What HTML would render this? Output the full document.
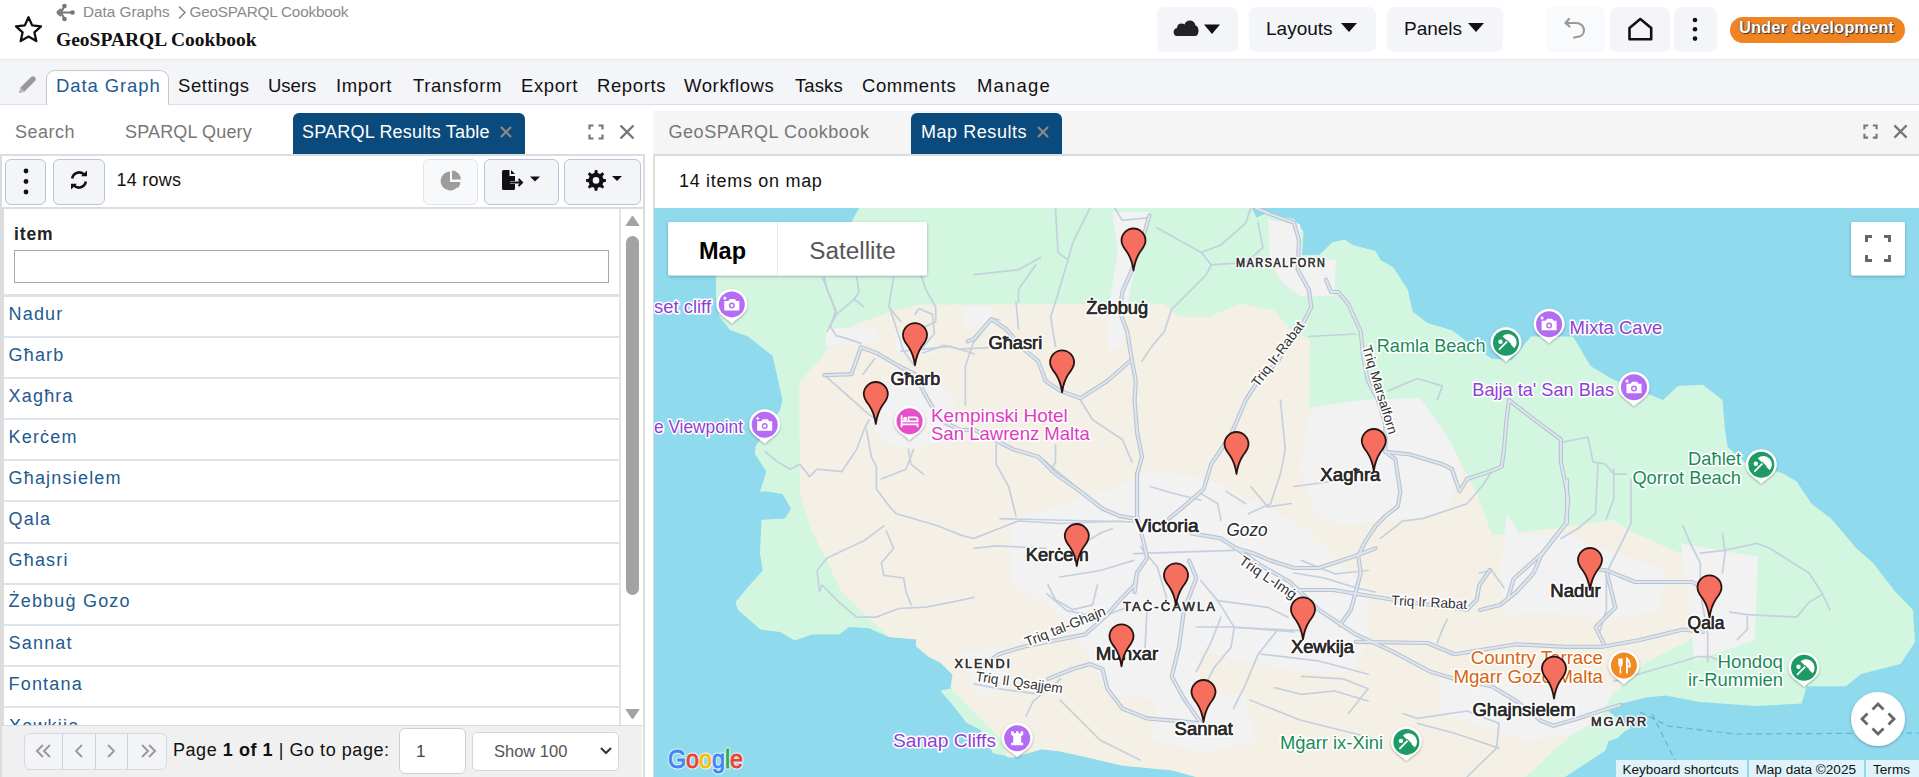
<!DOCTYPE html>
<html><head><meta charset="utf-8">
<style>
*{box-sizing:border-box;margin:0;padding:0}
html,body{width:1919px;height:777px;overflow:hidden;background:#fff;font-family:"Liberation Sans",sans-serif;color:#111}
.a{position:absolute}
.t{position:absolute;white-space:nowrap;line-height:1}
.hb{position:absolute;background:#f4f5f9;border-radius:7px}
.nav{position:absolute;left:0;top:59px;width:1919px;height:46px;background:#f4f5f9;border-top:1px solid #e6e8ee;border-bottom:1px solid #dcdfe5}
.ni{position:absolute;top:77px;font-size:18.5px;color:#111;line-height:1;white-space:nowrap}
.btn{position:absolute;background:#f4f5f9;border:1px solid #b9c3dd;border-radius:6px}
.row{position:absolute;left:3px;width:617px;height:2px;background:#dde3ea}
.rt{position:absolute;left:8.5px;font-size:18px;color:#245a8f;line-height:1;white-space:nowrap;letter-spacing:1.2px}
</style></head>
<body>
<!-- header -->
<svg class="a" style="left:13px;top:14px" width="31" height="31" viewBox="0 0 31 31"><path d="M15.5 3.2 L19.2 11.4 L28 12.3 L21.4 18.3 L23.3 27.1 L15.5 22.6 L7.7 27.1 L9.6 18.3 L3 12.3 L11.8 11.4 Z" fill="none" stroke="#111" stroke-width="2.3" stroke-linejoin="round"/></svg>
<svg class="a" style="left:55px;top:3px" width="21" height="19" viewBox="0 0 21 19"><g fill="#777"><circle cx="9.5" cy="3" r="2.3"/><circle cx="9.5" cy="16" r="2.3"/><circle cx="17.5" cy="9.5" r="2.3"/></g><path d="M2 9.5 L17 9.5 M9.5 3 L6 9.5 L9.5 16 M2 9.5 L6 6 M2 9.5 L6 13" stroke="#777" stroke-width="2" fill="none"/></svg>
<div class="t" style="left:83px;top:4px;font-size:15.3px;color:#8a8a8a">Data Graphs</div>
<svg class="a" style="left:177px;top:5px" width="10" height="15" viewBox="0 0 10 15"><path d="M2 1.5 L8 7.5 L2 13.5" stroke="#888" stroke-width="1.6" fill="none"/></svg>
<div class="t" style="left:189.5px;top:4px;font-size:15.3px;color:#8a8a8a;letter-spacing:-0.2px">GeoSPARQL Cookbook</div>
<div class="t" style="left:56px;top:29.8px;font-family:'Liberation Serif',serif;font-weight:bold;font-size:19.5px;color:#111">GeoSPARQL Cookbook</div>

<div class="hb" style="left:1157px;top:7px;width:81px;height:45px"></div>
<svg class="a" style="left:1172px;top:18px" width="50" height="20" viewBox="0 0 50 20"><path d="M5 18 C0.5 18 0.5 10.5 5 10 C5 5.5 10 4.5 12.5 6.5 C14 1 22.5 1 23.5 7.5 C27.5 8 27.5 17.5 23.5 18 Z" fill="#222"/><path d="M32 6.5 L48 6.5 L40 16 Z" fill="#111"/></svg>
<div class="hb" style="left:1249px;top:7px;width:127px;height:45px"></div>
<div class="t" style="left:1266px;top:19px;font-size:19px;color:#111">Layouts</div>
<svg class="a" style="left:1341px;top:23px" width="16" height="10" viewBox="0 0 16 10"><path d="M0 0 L16 0 L8 9 Z" fill="#111"/></svg>
<div class="hb" style="left:1387px;top:7px;width:116px;height:45px"></div>
<div class="t" style="left:1404px;top:19px;font-size:19px;color:#111">Panels</div>
<svg class="a" style="left:1468px;top:23px" width="16" height="10" viewBox="0 0 16 10"><path d="M0 0 L16 0 L8 9 Z" fill="#111"/></svg>

<div class="hb" style="left:1546px;top:7px;width:59px;height:45px;background:#f9fafb"></div>
<svg class="a" style="left:1563px;top:16px" width="26" height="26" viewBox="0 0 26 26"><path d="M6 3 L2.5 7 L6.5 10.5 M3 7 L13 7 C18 7 21 10.5 21 14 C21 18 18 21 13.5 21 L11 21.5" stroke="#999" stroke-width="2.2" fill="none" stroke-linecap="round" stroke-linejoin="round"/></svg>
<div class="hb" style="left:1610px;top:7px;width:60px;height:45px"></div>
<svg class="a" style="left:1626px;top:16px" width="29" height="27" viewBox="0 0 29 27"><path d="M3.5 12 L14.3 3 L25.2 12 L25.2 23.3 L3.5 23.3 Z" stroke="#111" stroke-width="2.6" fill="none" stroke-linejoin="round"/></svg>
<div class="hb" style="left:1674px;top:7px;width:43px;height:45px"></div>
<svg class="a" style="left:1690px;top:16px" width="10" height="27" viewBox="0 0 10 27"><g fill="#111"><circle cx="5" cy="4" r="2.3"/><circle cx="5" cy="13.3" r="2.3"/><circle cx="5" cy="22.6" r="2.3"/></g></svg>
<div class="a" style="left:1730px;top:17px;width:175px;height:26px;background:#f08322;border-radius:13px"></div>
<div class="t" style="left:1739px;top:18.5px;font-size:16.5px;font-weight:bold;color:#fff;letter-spacing:0.05px;text-shadow:1px 1px 1px #333,0 0 1px #333">Under development</div>

<!-- nav -->
<div class="nav"></div>
<svg class="a" style="left:16px;top:74px" width="22" height="22" viewBox="0 0 22 22"><path d="M3 19 L4.5 13.5 L15 3 C16 2 17.5 2 18.5 3 L19 3.5 C20 4.5 20 6 19 7 L8.5 17.5 Z" fill="#999"/><path d="M3 19 L4.5 13.5 L8.5 17.5 Z" fill="#bbb"/></svg>
<div class="a" style="left:46px;top:70px;width:123px;height:35px;background:#fff;border:1px solid #c8c8c8;border-bottom:none;border-radius:9px 9px 0 0"></div>
<div class="ni" style="left:56px;color:#1d5b96;letter-spacing:0.9px">Data Graph</div>
<div class="ni" style="left:178px;letter-spacing:0.6px">Settings</div>
<div class="ni" style="left:268px;letter-spacing:0.0px">Users</div>
<div class="ni" style="left:336px;letter-spacing:0.6px">Import</div>
<div class="ni" style="left:413px;letter-spacing:0.6px">Transform</div>
<div class="ni" style="left:521px;letter-spacing:0.6px">Export</div>
<div class="ni" style="left:597px;letter-spacing:0.6px">Reports</div>
<div class="ni" style="left:684px;letter-spacing:0.6px">Workflows</div>
<div class="ni" style="left:795px;letter-spacing:0.1px">Tasks</div>
<div class="ni" style="left:862px;letter-spacing:0.6px">Comments</div>
<div class="ni" style="left:977px;letter-spacing:1.2px">Manage</div>

<!-- LEFT PANEL -->
<div class="t" style="left:15px;top:123px;font-size:18px;color:#777;letter-spacing:0.5px">Search</div>
<div class="t" style="left:125px;top:123px;font-size:18px;color:#777;letter-spacing:0.15px">SPARQL Query</div>
<div class="a" style="left:293px;top:113px;width:232px;height:41px;background:#0b4a7c;border-radius:6px 6px 0 0"></div>
<div class="t" style="left:302px;top:123px;font-size:18px;color:#fff;letter-spacing:0.2px">SPARQL Results Table</div>
<svg class="a" style="left:499px;top:125px" width="14" height="14" viewBox="0 0 14 14"><path d="M2 2 L12 12 M12 2 L2 12" stroke="#8a8a8a" stroke-width="2.2"/></svg>
<svg class="a" style="left:588px;top:124px" width="16" height="16" viewBox="0 0 16 16"><path d="M1.5 5.5 V1.5 H5.5 M10.5 1.5 H14.5 V5.5 M14.5 10.5 V14.5 H10.5 M5.5 14.5 H1.5 V10.5" stroke="#777" stroke-width="2.2" fill="none"/></svg>
<svg class="a" style="left:619px;top:124px" width="16" height="16" viewBox="0 0 16 16"><path d="M1.5 1.5 L14.5 14.5 M14.5 1.5 L1.5 14.5" stroke="#777" stroke-width="2.4"/></svg>
<div class="a" style="left:0;top:154px;width:645px;height:623px;border:2px solid #dcdcdc;border-bottom:none"></div>

<div class="btn" style="left:5px;top:159px;width:41px;height:46px"></div>
<svg class="a" style="left:21px;top:166px" width="10" height="32" viewBox="0 0 10 32"><g fill="#111"><circle cx="5" cy="5" r="2.4"/><circle cx="5" cy="15.5" r="2.4"/><circle cx="5" cy="26" r="2.4"/></g></svg>
<div class="btn" style="left:53px;top:159px;width:52px;height:46px"></div>
<svg class="a" style="left:69px;top:170px" width="20" height="20" viewBox="0 0 20 20"><path d="M3.2 8.5 A7 7 0 0 1 15.5 5" stroke="#111" stroke-width="2.6" fill="none"/><path d="M12 6.2 L18 6.2 L18 0.5 Z" fill="#111"/><path d="M16.8 11.5 A7 7 0 0 1 4.5 15" stroke="#111" stroke-width="2.6" fill="none"/><path d="M8 13.8 L2 13.8 L2 19.5 Z" fill="#111"/></svg>
<div class="t" style="left:116.5px;top:171px;font-size:18px;color:#111;letter-spacing:0.25px">14 rows</div>
<div class="btn" style="left:423px;top:159px;width:55px;height:46px;background:#f8f9fb;border-color:#dfe3ee"></div>
<svg class="a" style="left:440px;top:170px" width="22" height="22" viewBox="0 0 22 22"><path d="M10 1.5 A9.5 9.5 0 1 0 19.5 12 L10 12 Z" fill="#9c9c9c"/><path d="M12 0.5 A9.5 9.5 0 0 1 21 9.5 L12 9.5 Z" fill="#9c9c9c"/><path d="M12.2 12.2 L20.5 12.2 A9.5 9.5 0 0 1 18 18.2 Z" fill="#9c9c9c"/></svg>
<div class="btn" style="left:484px;top:159px;width:75px;height:46px"></div>
<svg class="a" style="left:500px;top:169px" width="45" height="22" viewBox="0 0 45 22"><path d="M2 2.5 Q2 1 3.5 1 L9.5 1 L9.5 7 L15 7 L15 12 L10 12 L10 15 L15 15 L15 19.5 Q15 21 13.5 21 L3.5 21 Q2 21 2 19.5 Z" fill="#111"/><path d="M11 1 L15 5 L11 5 Z" fill="#111"/><path d="M10 13.5 L22 13.5 M18.5 10 L22 13.5 L18.5 17" stroke="#111" stroke-width="2" fill="none"/><path d="M30 7.5 L40 7.5 L35 12.5 Z" fill="#111"/></svg>
<div class="btn" style="left:564px;top:159px;width:77px;height:46px"></div>
<svg class="a" style="left:584px;top:169px" width="42" height="22" viewBox="0 0 42 22"><path d="M11 1 L13.3 1 L13.8 4 L16 5 L18.5 3.2 L20.2 5 L18.5 7.5 L19.3 9.7 L22 10.2 L22 12.7 L19.3 13.2 L18.5 15.4 L20.2 17.9 L18.5 19.6 L16 17.9 L13.8 18.8 L13.3 21.8 L10.7 21.8 L10.2 18.8 L8 17.9 L5.5 19.6 L3.8 17.9 L5.5 15.4 L4.6 13.2 L2 12.7 L2 10.2 L4.6 9.7 L5.5 7.5 L3.8 5 L5.5 3.2 L8 5 L10.2 4 Z" fill="#111"/><circle cx="12" cy="11.4" r="3.3" fill="#f4f5f9"/><path d="M28 7 L38 7 L33 12 Z" fill="#111"/></svg>
<div class="a" style="left:2px;top:207px;width:641px;height:2px;background:#dcdcdc"></div>

<!-- table -->
<div class="a" style="left:2px;top:209px;width:2px;height:516px;background:#dcdcdc"></div>
<div class="t" style="left:14px;top:226px;font-size:17.5px;font-weight:bold;color:#222;letter-spacing:0.9px">item</div>
<div class="a" style="left:14px;top:250px;width:595px;height:33px;border:1px solid #a8a8a8;background:#fff"></div>
<div class="a" style="left:3px;top:294px;width:617px;height:3px;background:#dee2e7"></div>
<div class="a" style="left:619px;top:209px;width:2px;height:516px;background:#e1e5ea"></div>
<div class="row" style="top:336px"></div><div class="row" style="top:377px"></div><div class="row" style="top:418px"></div><div class="row" style="top:459px"></div><div class="row" style="top:500px"></div><div class="row" style="top:542px"></div><div class="row" style="top:583px"></div><div class="row" style="top:624px"></div><div class="row" style="top:665px"></div><div class="row" style="top:706px"></div>
<div class="rt" style="top:304.6px">Nadur</div>
<div class="rt" style="top:345.7px">Għarb</div>
<div class="rt" style="top:386.8px">Xagħra</div>
<div class="rt" style="top:428.0px">Kerċem</div>
<div class="rt" style="top:469.1px">Għajnsielem</div>
<div class="rt" style="top:510.2px">Qala</div>
<div class="rt" style="top:551.3px">Għasri</div>
<div class="rt" style="top:592.4px">Żebbuġ Gozo</div>
<div class="rt" style="top:633.6px">Sannat</div>
<div class="rt" style="top:674.7px">Fontana</div>
<div class="a" style="left:3px;top:708px;width:616px;height:17px;overflow:hidden"><div class="rt" style="top:9px;left:6px">Xewkija</div></div>
<svg class="a" style="left:625px;top:215px" width="15" height="12" viewBox="0 0 15 12"><path d="M7.5 1 L14 10.5 L1 10.5 Z" fill="#a3a3a3" stroke="#a3a3a3" stroke-width="1" stroke-linejoin="round"/></svg>
<div class="a" style="left:626px;top:236px;width:13px;height:359px;background:#a3a3a3;border-radius:6.5px"></div>
<svg class="a" style="left:625px;top:708px" width="15" height="12" viewBox="0 0 15 12"><path d="M1 1.5 L14 1.5 L7.5 11 Z" fill="#a3a3a3" stroke="#a3a3a3" stroke-width="1" stroke-linejoin="round"/></svg>

<!-- footer -->
<div class="a" style="left:2px;top:725px;width:640px;height:52px;background:#f0f0f0;border-top:1px solid #d8d8d8"></div>
<div class="a" style="left:24px;top:733px;width:143px;height:37px;border:1px solid #d5dae6;border-radius:6px;background:#f3f4f7"></div>
<div class="a" style="left:62px;top:734px;width:1px;height:35px;background:#c9d0e2"></div>
<div class="a" style="left:95px;top:734px;width:1px;height:35px;background:#c9d0e2"></div>
<div class="a" style="left:127px;top:734px;width:1px;height:35px;background:#c9d0e2"></div>
<svg class="a" style="left:34px;top:743px" width="20" height="16" viewBox="0 0 20 16"><path d="M9 2 L3 8 L9 14 M16 2 L10 8 L16 14" stroke="#9a9a9a" stroke-width="2" fill="none"/></svg>
<svg class="a" style="left:73px;top:743px" width="12" height="16" viewBox="0 0 12 16"><path d="M9 2 L3 8 L9 14" stroke="#9a9a9a" stroke-width="1.8" fill="none"/></svg>
<svg class="a" style="left:105px;top:743px" width="12" height="16" viewBox="0 0 12 16"><path d="M3 2 L9 8 L3 14" stroke="#9a9a9a" stroke-width="1.8" fill="none"/></svg>
<svg class="a" style="left:138px;top:743px" width="20" height="16" viewBox="0 0 20 16"><path d="M4 2 L10 8 L4 14 M11 2 L17 8 L11 14" stroke="#9a9a9a" stroke-width="2" fill="none"/></svg>
<div class="t" style="left:173px;top:740.5px;font-size:18px;color:#111;letter-spacing:0.55px">Page <b>1 of 1</b> | Go to page:</div>
<div class="a" style="left:399px;top:728px;width:67px;height:46px;border:1px solid #cfcfcf;border-radius:6px;background:#fff"></div>
<div class="t" style="left:416px;top:743px;font-size:17px;color:#444">1</div>
<div class="a" style="left:472px;top:732px;width:147px;height:39px;border:1px solid #d6d6d6;border-radius:5px;background:#fff"></div>
<div class="t" style="left:494px;top:743px;font-size:16.5px;color:#555">Show 100</div>
<svg class="a" style="left:599px;top:746px" width="14" height="10" viewBox="0 0 14 10"><path d="M2 2 L7 7 L12 2" stroke="#333" stroke-width="2" fill="none"/></svg>

<!-- RIGHT PANEL -->
<div class="a" style="left:653px;top:111px;width:1266px;height:43px;background:#f5f5f5"></div>
<div class="t" style="left:668.5px;top:123px;font-size:18px;color:#777;letter-spacing:0.55px">GeoSPARQL Cookbook</div>
<div class="a" style="left:911px;top:113px;width:151px;height:41px;background:#0b4a7c;border-radius:6px 6px 0 0"></div>
<div class="t" style="left:921px;top:123px;font-size:18px;color:#fff;letter-spacing:0.55px">Map Results</div>
<svg class="a" style="left:1036px;top:125px" width="14" height="14" viewBox="0 0 14 14"><path d="M2 2 L12 12 M12 2 L2 12" stroke="#8a8a8a" stroke-width="2.2"/></svg>
<svg class="a" style="left:1863px;top:124px" width="15" height="15" viewBox="0 0 16 16"><path d="M1.5 5.5 V1.5 H5.5 M10.5 1.5 H14.5 V5.5 M14.5 10.5 V14.5 H10.5 M5.5 14.5 H1.5 V10.5" stroke="#777" stroke-width="2.2" fill="none"/></svg>
<svg class="a" style="left:1893px;top:124px" width="15" height="15" viewBox="0 0 16 16"><path d="M1.5 1.5 L14.5 14.5 M14.5 1.5 L1.5 14.5" stroke="#777" stroke-width="2.4"/></svg>
<div class="a" style="left:653px;top:154px;width:1266px;height:623px;border:2px solid #dcdcdc;border-right:none;border-bottom:none"></div>
<div class="t" style="left:679px;top:172px;font-size:18px;color:#111;letter-spacing:0.7px">14 items on map</div>

<!-- MAP -->
<div id="map" class="a" style="left:654px;top:208px;width:1265px;height:569px;overflow:hidden;background:#90daee">
<svg width="1265" height="569" viewBox="654 208 1265 569" style="position:absolute;left:0;top:0">
<rect x="654" y="208" width="1265" height="569" fill="#90daee"/>
<path d="M859.0 208.0 L1251.8 208.0 L1256.5 217.4 L1266.0 213.5 L1294.2 219.0 L1303.6 231.6 L1302.0 255.0 L1319.3 255.0 L1332.0 242.5 L1344.5 239.4 L1353.0 245.0 L1375.5 251.0 L1380.5 260.0 L1393.0 267.0 L1407.7 289.5 L1412.6 311.8 L1427.4 322.9 L1452.0 330.3 L1467.0 341.4 L1491.7 358.7 L1511.4 360.0 L1531.0 336.5 L1573.0 336.5 L1590.5 366.0 L1611.0 378.5 L1663.0 400.0 L1678.0 386.0 L1702.8 384.7 L1722.5 400.0 L1725.0 429.7 L1727.5 447.0 L1747.0 464.0 L1781.8 473.0 L1796.7 481.5 L1811.5 503.8 L1831.0 518.6 L1856.0 548.0 L1873.0 563.0 L1895.5 592.0 L1913.0 610.0 L1915.0 642.0 L1900.5 664.0 L1861.0 674.0 L1846.0 686.3 L1806.6 686.3 L1801.6 703.6 L1757.0 706.0 L1700.0 702.0 L1665.7 695.4 L1646.0 697.6 L1620.5 703.7 L1608.4 711.2 L1631.0 727.8 L1623.5 732.3 L1617.5 738.3 L1608.4 741.3 L1605.4 750.4 L1591.9 759.4 L1565.0 777.0 L1196.4 777.0 L1171.7 770.3 L1122.0 765.4 L1090.0 758.0 L1060.0 751.3 L1041.4 749.3 L1013.0 757.4 L993.0 753.3 L980.8 730.0 L966.7 723.0 L952.5 704.8 L940.4 690.7 L948.5 688.7 L960.6 688.7 L968.7 692.7 L964.6 680.6 L968.7 673.5 L986.9 667.5 L978.8 668.5 L958.6 669.5 L952.5 674.5 L940.4 662.4 L928.3 656.4 L916.2 646.3 L916.2 639.2 L888.7 637.0 L869.0 628.2 L849.2 627.0 L839.3 634.4 L812.0 634.4 L794.8 640.6 L780.0 632.0 L760.3 629.5 L738.0 609.7 L735.5 602.3 L745.4 590.0 L762.7 570.5 L760.0 553.0 L761.5 519.8 L785.0 518.6 L791.0 508.7 L782.5 494.0 L767.7 491.4 L760.0 491.4 L766.4 471.7 L755.0 454.0 L755.3 447.0 L780.0 410.0 L782.5 400.0 L772.6 356.0 L748.0 336.5 L730.0 330.0 L719.5 316.7 L716.0 300.0 L716.0 276.0 L790.0 255.0 L850.0 225.0 Z" fill="#d3f6e1"/>
<path d="M799.3 400.0 L799.3 382.0 L818.6 360.7 L838.0 333.7 L857.2 324.0 L888.0 312.5 L919.0 304.7 L974.0 304.4 L1164.0 304.0 L1179.0 316.7 L1208.7 316.7 L1240.8 303.8 L1273.8 310.0 L1291.0 330.0 L1310.0 340.0 L1309.0 400.0 L1309.0 425.0 L1373.0 425.0 L1440.0 425.0 L1464.5 469.0 L1477.0 494.0 L1491.7 534.7 L1505.0 534.0 L1542.0 530.0 L1613.0 520.0 L1630.0 531.0 L1655.0 542.0 L1692.0 559.0 L1700.0 600.0 L1690.0 640.0 L1646.0 662.0 L1618.0 690.0 L1587.0 720.0 L1525.6 777.0 L1196.4 777.0 L1171.7 770.3 L1122.0 765.4 L1090.0 758.0 L1060.0 751.3 L1041.4 749.3 L1013.0 757.4 L1007.0 757.0 L1001.0 739.2 L950.5 687.7 L952.5 674.5 L940.4 662.4 L928.3 656.4 L916.2 646.3 L916.2 639.2 L888.7 637.0 L841.8 592.0 L812.0 531.0 L799.8 494.0 Z" fill="#f5f0e6"/>
<path d="M826.0 328.0 L876.5 328.0 L880.0 343.0 L826.0 345.0 Z" fill="#f2f2f3"/>
<path d="M895.8 331.8 L934.4 331.8 L934.4 355.0 L895.8 355.0 Z" fill="#f2f2f3"/>
<path d="M880.0 378.0 L930.0 382.0 L955.0 395.0 L950.0 440.0 L915.0 448.0 L885.0 445.0 L870.0 420.0 Z" fill="#f2f2f3"/>
<path d="M965.0 306.7 L992.0 306.7 L992.0 328.0 L965.0 328.0 Z" fill="#f2f2f3"/>
<path d="M1112.0 212.0 L1150.0 212.0 L1140.0 250.0 L1128.0 300.0 L1122.0 345.0 L1108.0 352.0 L1110.0 300.0 L1118.0 250.0 Z" fill="#f2f2f3"/>
<path d="M1268.0 220.0 L1300.0 224.0 L1302.0 258.0 L1336.0 260.0 L1334.0 296.0 L1300.0 296.0 L1282.0 282.0 L1270.0 262.0 Z" fill="#f2f2f3"/>
<path d="M1310.0 408.0 L1360.0 400.0 L1420.0 398.0 L1450.0 440.0 L1462.0 470.0 L1445.0 515.0 L1390.0 520.0 L1340.0 525.0 L1315.0 515.0 L1300.0 470.0 Z" fill="#f2f2f3"/>
<path d="M1010.0 520.0 L1060.0 505.0 L1110.0 490.0 L1150.0 470.0 L1210.0 480.0 L1250.0 500.0 L1300.0 525.0 L1335.0 560.0 L1365.0 585.0 L1370.0 640.0 L1350.0 672.0 L1300.0 672.0 L1240.0 660.0 L1200.0 650.0 L1200.0 700.0 L1160.0 700.0 L1110.0 695.0 L1085.0 650.0 L1050.0 605.0 L1010.0 585.0 Z" fill="#f2f2f3"/>
<path d="M1507.0 513.0 L1520.0 535.0 L1570.0 535.0 L1600.0 548.0 L1665.0 570.0 L1660.0 610.0 L1620.0 618.0 L1540.0 612.0 L1505.0 615.0 L1500.0 570.0 Z" fill="#f2f2f3"/>
<path d="M1681.0 543.5 L1758.0 557.0 L1754.6 640.6 L1714.4 654.0 L1694.3 660.6 L1687.7 600.4 Z" fill="#f2f2f3"/>
<path d="M1440.0 677.4 L1490.2 674.0 L1597.3 680.7 L1614.0 687.4 L1600.6 717.5 L1573.9 734.3 L1523.7 741.0 L1490.2 727.6 L1440.0 714.2 Z" fill="#f2f2f3"/>
<path d="M1160.0 690.0 L1245.0 695.0 L1255.0 742.0 L1200.0 752.0 L1150.0 738.0 Z" fill="#f2f2f3"/>
<path d="M960.0 652.0 L1005.0 648.0 L1010.0 690.0 L975.0 695.0 Z" fill="#f2f2f3"/>
<path d="M1043.5 460.0 L1100.4 506.9" fill="none" stroke="#c5d0de" stroke-width="1.7" stroke-linejoin="round" stroke-linecap="round"/>
<path d="M1000.0 518.6 L1133.9 522.0" fill="none" stroke="#c5d0de" stroke-width="1.7" stroke-linejoin="round" stroke-linecap="round"/>
<path d="M1133.9 553.7 L1234.3 550.4" fill="none" stroke="#c5d0de" stroke-width="1.7" stroke-linejoin="round" stroke-linecap="round"/>
<path d="M1140.6 547.0 L1157.3 567.0 L1167.4 600.6" fill="none" stroke="#c5d0de" stroke-width="1.7" stroke-linejoin="round" stroke-linecap="round"/>
<path d="M1060.0 577.0 L1100.4 570.5 L1133.9 560.4" fill="none" stroke="#c5d0de" stroke-width="1.7" stroke-linejoin="round" stroke-linecap="round"/>
<path d="M1046.9 593.9 L1066.9 610.6 L1100.4 617.3 L1127.2 607.3" fill="none" stroke="#c5d0de" stroke-width="1.7" stroke-linejoin="round" stroke-linecap="round"/>
<path d="M1200.8 580.5 L1217.6 600.6 L1234.3 627.4 L1301.3 630.7" fill="none" stroke="#c5d0de" stroke-width="1.7" stroke-linejoin="round" stroke-linecap="round"/>
<path d="M1217.6 600.6 L1267.8 607.3 L1287.9 617.3" fill="none" stroke="#c5d0de" stroke-width="1.7" stroke-linejoin="round" stroke-linecap="round"/>
<path d="M1234.3 627.4 L1231.0 647.4 L1214.2 667.5 L1200.8 694.3" fill="none" stroke="#c5d0de" stroke-width="1.7" stroke-linejoin="round" stroke-linecap="round"/>
<path d="M1261.1 654.1 L1318.0 660.8 L1368.2 674.2" fill="none" stroke="#c5d0de" stroke-width="1.7" stroke-linejoin="round" stroke-linecap="round"/>
<path d="M1301.3 560.4 L1334.7 573.8 L1368.2 570.5" fill="none" stroke="#c5d0de" stroke-width="1.7" stroke-linejoin="round" stroke-linecap="round"/>
<path d="M1251.0 486.8 L1267.8 506.9 L1291.2 503.5" fill="none" stroke="#c5d0de" stroke-width="1.7" stroke-linejoin="round" stroke-linecap="round"/>
<path d="M1200.8 493.5 L1217.6 503.5 L1221.0 520.2" fill="none" stroke="#c5d0de" stroke-width="1.7" stroke-linejoin="round" stroke-linecap="round"/>
<path d="M1150.6 486.8 L1174.0 493.5 L1200.8 500.2" fill="none" stroke="#c5d0de" stroke-width="1.7" stroke-linejoin="round" stroke-linecap="round"/>
<path d="M1274.5 687.6 L1301.3 694.3 L1334.7 691.0 L1368.2 701.0" fill="none" stroke="#c5d0de" stroke-width="1.7" stroke-linejoin="round" stroke-linecap="round"/>
<path d="M824.4 375.2 L847.6 395.5 L866.9 412.9 L876.5 420.0" fill="none" stroke="#c5d0de" stroke-width="1.7" stroke-linejoin="round" stroke-linecap="round"/>
<path d="M965.3 405.0 L965.3 366.5 L973.0 343.4 L992.4 318.3 L1000.0 320.0" fill="none" stroke="#c5d0de" stroke-width="1.7" stroke-linejoin="round" stroke-linecap="round"/>
<path d="M890.0 308.6 L903.6 351.0 L915.0 366.5" fill="none" stroke="#c5d0de" stroke-width="1.7" stroke-linejoin="round" stroke-linecap="round"/>
<path d="M915.0 314.4 L919.0 308.6 L932.5 314.4 L934.4 333.7 L922.9 347.2" fill="none" stroke="#c5d0de" stroke-width="1.7" stroke-linejoin="round" stroke-linecap="round"/>
<path d="M922.9 353.0 L944.0 345.3 L959.5 349.2 L1000.0 347.2" fill="none" stroke="#c5d0de" stroke-width="1.7" stroke-linejoin="round" stroke-linecap="round"/>
<path d="M863.0 374.2 L874.6 358.8" fill="none" stroke="#c5d0de" stroke-width="1.7" stroke-linejoin="round" stroke-linecap="round"/>
<path d="M822.5 277.7 L836.0 310.5 L830.2 326.0 L836.0 335.6 L843.7 337.6 L861.0 343.4" fill="none" stroke="#c5d0de" stroke-width="1.7" stroke-linejoin="round" stroke-linecap="round"/>
<path d="M824.5 277.2 L827.0 289.5 L836.8 314.2 L827.0 331.5" fill="none" stroke="#c5d0de" stroke-width="1.7" stroke-linejoin="round" stroke-linecap="round"/>
<path d="M856.6 277.0 L859.0 292.0 L854.0 299.4 L836.8 314.2" fill="none" stroke="#c5d0de" stroke-width="1.7" stroke-linejoin="round" stroke-linecap="round"/>
<path d="M854.0 299.0 L864.0 306.8" fill="none" stroke="#c5d0de" stroke-width="1.7" stroke-linejoin="round" stroke-linecap="round"/>
<path d="M893.7 277.2 L891.2 292.0 L888.7 306.8 L901.0 321.7" fill="none" stroke="#c5d0de" stroke-width="1.7" stroke-linejoin="round" stroke-linecap="round"/>
<path d="M920.9 274.7 L925.8 289.5 L935.7 306.8 L935.7 321.7 L925.8 326.6" fill="none" stroke="#c5d0de" stroke-width="1.7" stroke-linejoin="round" stroke-linecap="round"/>
<path d="M901.0 351.3 L925.8 348.8 L950.5 346.4 L974.0 353.8" fill="none" stroke="#c5d0de" stroke-width="1.7" stroke-linejoin="round" stroke-linecap="round"/>
<path d="M1147.0 217.9 L1122.3 220.4 L1114.8 208.0" fill="none" stroke="#c5d0de" stroke-width="1.7" stroke-linejoin="round" stroke-linecap="round"/>
<path d="M1156.8 227.8 L1201.3 252.5 L1211.2 264.8 L1206.3 274.7 L1196.4 284.6 L1171.7 309.3 L1164.3 331.5 L1151.9 346.4 L1142.0 361.2" fill="none" stroke="#c5d0de" stroke-width="1.7" stroke-linejoin="round" stroke-linecap="round"/>
<path d="M1201.3 252.5 L1221.0 245.0 L1245.8 222.8 L1250.7 208.0" fill="none" stroke="#c5d0de" stroke-width="1.7" stroke-linejoin="round" stroke-linecap="round"/>
<path d="M1211.0 264.8 L1245.8 262.4 L1263.0 247.5 L1258.0 222.8" fill="none" stroke="#c5d0de" stroke-width="1.7" stroke-linejoin="round" stroke-linecap="round"/>
<path d="M1016.0 301.9 L1018.5 329.0" fill="none" stroke="#c5d0de" stroke-width="1.7" stroke-linejoin="round" stroke-linecap="round"/>
<path d="M1055.5 208.0 L1058.0 252.5 L1068.0 259.9 L1055.5 301.9 L1050.6 316.7 L1055.5 346.4" fill="none" stroke="#c5d0de" stroke-width="1.7" stroke-linejoin="round" stroke-linecap="round"/>
<path d="M1090.0 208.0 L1072.8 242.6 L1068.0 259.9" fill="none" stroke="#c5d0de" stroke-width="1.7" stroke-linejoin="round" stroke-linecap="round"/>
<path d="M974.0 274.7 L1018.5 269.8 L1040.7 257.4" fill="none" stroke="#c5d0de" stroke-width="1.7" stroke-linejoin="round" stroke-linecap="round"/>
<path d="M1018.5 301.9 L1018.5 289.5 L1035.8 264.8" fill="none" stroke="#c5d0de" stroke-width="1.7" stroke-linejoin="round" stroke-linecap="round"/>
<path d="M1308.8 336.5 L1355.8 334.0" fill="none" stroke="#c5d0de" stroke-width="1.7" stroke-linejoin="round" stroke-linecap="round"/>
<path d="M1388.0 390.9 L1417.5 378.5 L1442.3 385.9 L1437.3 400.0" fill="none" stroke="#c5d0de" stroke-width="1.7" stroke-linejoin="round" stroke-linecap="round"/>
<path d="M765.2 451.9 L777.5 461.8 L789.9 469.2 L799.8 464.2 L809.7 476.6 L817.0 469.2 L841.8 471.7 L856.6 449.4 L864.0 429.7 L869.0 419.8" fill="none" stroke="#c5d0de" stroke-width="1.7" stroke-linejoin="round" stroke-linecap="round"/>
<path d="M866.5 429.7 L871.4 456.8 L876.4 466.7 L876.4 489.0 L891.2 508.7 L896.2 513.7 L913.5 518.6 L938.2 526.0 L962.9 535.9 L974.0 538.4 L1018.5 521.0 L1060.5 523.5 L1122.3 521.0" fill="none" stroke="#c5d0de" stroke-width="1.7" stroke-linejoin="round" stroke-linecap="round"/>
<path d="M883.8 526.0 L864.0 540.8 L827.0 558.1 L817.0 570.5 L819.6 592.0 L822.0 585.0 L839.3 602.3 L856.6 617.1 L876.4 617.1 L898.6 608.5 L925.8 607.2 L950.5 602.3 L974.0 597.4" fill="none" stroke="#c5d0de" stroke-width="1.7" stroke-linejoin="round" stroke-linecap="round"/>
<path d="M886.3 531.0 L893.7 548.3 L881.3 563.0 L883.8 575.4 L903.6 578.0 L906.0 592.0 L911.0 604.8" fill="none" stroke="#c5d0de" stroke-width="1.7" stroke-linejoin="round" stroke-linecap="round"/>
<path d="M908.5 449.4 L911.0 464.2 L923.3 474.1" fill="none" stroke="#c5d0de" stroke-width="1.7" stroke-linejoin="round" stroke-linecap="round"/>
<path d="M913.5 449.4 L906.0 469.2 L881.3 479.0" fill="none" stroke="#c5d0de" stroke-width="1.7" stroke-linejoin="round" stroke-linecap="round"/>
<path d="M974.0 548.3 L996.2 545.8 L1045.7 548.3" fill="none" stroke="#c5d0de" stroke-width="1.7" stroke-linejoin="round" stroke-linecap="round"/>
<path d="M1075.3 548.3 L1100.0 533.4 L1112.3 528.5" fill="none" stroke="#c5d0de" stroke-width="1.7" stroke-linejoin="round" stroke-linecap="round"/>
<path d="M996.2 444.5 L996.2 464.2 L1008.6 486.5 L1016.0 516.1" fill="none" stroke="#c5d0de" stroke-width="1.7" stroke-linejoin="round" stroke-linecap="round"/>
<path d="M1055.5 444.5 L1055.5 461.8 L1050.6 471.7" fill="none" stroke="#c5d0de" stroke-width="1.7" stroke-linejoin="round" stroke-linecap="round"/>
<path d="M1080.3 400.0 L1092.6 419.8 L1122.3 439.5 L1132.0 461.8" fill="none" stroke="#c5d0de" stroke-width="1.7" stroke-linejoin="round" stroke-linecap="round"/>
<path d="M1226.0 491.4 L1245.8 503.8" fill="none" stroke="#c5d0de" stroke-width="1.7" stroke-linejoin="round" stroke-linecap="round"/>
<path d="M1280.4 400.0 L1285.3 449.4 L1280.4 474.1 L1270.5 503.8 L1248.3 513.7" fill="none" stroke="#c5d0de" stroke-width="1.7" stroke-linejoin="round" stroke-linecap="round"/>
<path d="M1294.0 486.5 L1331.0 481.5 L1355.8 471.7" fill="none" stroke="#c5d0de" stroke-width="1.7" stroke-linejoin="round" stroke-linecap="round"/>
<path d="M1294.0 573.0 L1323.7 577.9 L1355.8 587.8 L1375.5 592.0" fill="none" stroke="#c5d0de" stroke-width="1.7" stroke-linejoin="round" stroke-linecap="round"/>
<path d="M1380.5 538.4 L1402.7 521.0 L1422.5 518.6 L1467.0 503.8 L1481.8 486.5 L1491.7 471.7" fill="none" stroke="#c5d0de" stroke-width="1.7" stroke-linejoin="round" stroke-linecap="round"/>
<path d="M1479.3 573.0 L1491.7 570.5 L1504.0 587.8" fill="none" stroke="#c5d0de" stroke-width="1.7" stroke-linejoin="round" stroke-linecap="round"/>
<path d="M1563.3 442.0 L1588.0 437.0 L1593.0 461.8 L1605.3 464.2 L1614.0 474.1 L1626.2 474.1" fill="none" stroke="#c5d0de" stroke-width="1.7" stroke-linejoin="round" stroke-linecap="round"/>
<path d="M1598.0 464.2 L1595.5 513.7 L1578.0 528.5 L1560.9 538.4" fill="none" stroke="#c5d0de" stroke-width="1.7" stroke-linejoin="round" stroke-linecap="round"/>
<path d="M1613.8 469.2 L1613.8 498.8 L1606.4 518.6" fill="none" stroke="#c5d0de" stroke-width="1.7" stroke-linejoin="round" stroke-linecap="round"/>
<path d="M1631.0 479.0 L1631.0 523.5 L1618.8 548.3 L1606.4 573.0 L1606.4 609.7 L1599.0 634.4" fill="none" stroke="#c5d0de" stroke-width="1.7" stroke-linejoin="round" stroke-linecap="round"/>
<path d="M1683.0 526.0 L1690.4 543.3 L1700.3 563.0 L1700.3 592.0 L1707.7 634.4 L1707.7 661.6" fill="none" stroke="#c5d0de" stroke-width="1.7" stroke-linejoin="round" stroke-linecap="round"/>
<path d="M1722.5 533.4 L1725.0 553.2 L1722.5 573.0" fill="none" stroke="#c5d0de" stroke-width="1.7" stroke-linejoin="round" stroke-linecap="round"/>
<path d="M1700.3 553.2 L1722.5 550.7 L1757.0 543.3 L1769.5 548.3 L1809.0 573.0 L1821.4 592.0 L1830.0 610.0" fill="none" stroke="#c5d0de" stroke-width="1.7" stroke-linejoin="round" stroke-linecap="round"/>
<path d="M1613.8 681.4 L1697.8 656.7 L1710.2 656.7 L1727.5 664.1" fill="none" stroke="#c5d0de" stroke-width="1.7" stroke-linejoin="round" stroke-linecap="round"/>
<path d="M1730.0 612.2 L1747.3 614.7 L1796.7 617.1 L1809.0 602.3 L1821.4 594.9" fill="none" stroke="#c5d0de" stroke-width="1.7" stroke-linejoin="round" stroke-linecap="round"/>
<path d="M1747.3 617.1 L1747.3 629.5 L1737.4 639.4" fill="none" stroke="#c5d0de" stroke-width="1.7" stroke-linejoin="round" stroke-linecap="round"/>
<path d="M1048.0 585.0 L1055.5 599.8 L1072.8 609.7 L1092.6 604.8 L1097.5 585.0" fill="none" stroke="#c5d0de" stroke-width="1.7" stroke-linejoin="round" stroke-linecap="round"/>
<path d="M1026.0 716.0 L1033.3 701.1 L1060.5 678.9" fill="none" stroke="#c5d0de" stroke-width="1.7" stroke-linejoin="round" stroke-linecap="round"/>
<path d="M974.0 683.8 L998.7 688.8 L1035.8 693.7 L1055.5 683.8 L1060.5 678.9" fill="none" stroke="#c5d0de" stroke-width="1.7" stroke-linejoin="round" stroke-linecap="round"/>
<path d="M1144.5 659.1 L1147.0 609.7" fill="none" stroke="#c5d0de" stroke-width="1.7" stroke-linejoin="round" stroke-linecap="round"/>
<path d="M1196.4 671.5 L1211.2 641.8 L1221.0 617.1" fill="none" stroke="#c5d0de" stroke-width="1.7" stroke-linejoin="round" stroke-linecap="round"/>
<path d="M1233.5 708.5 L1245.8 683.8 L1258.2 654.2 L1277.9 629.5" fill="none" stroke="#c5d0de" stroke-width="1.7" stroke-linejoin="round" stroke-linecap="round"/>
<path d="M1196.4 627.0 L1233.5 627.0 L1294.0 632.0" fill="none" stroke="#c5d0de" stroke-width="1.7" stroke-linejoin="round" stroke-linecap="round"/>
<path d="M1402.7 713.5 L1417.5 718.4 L1467.0 711.0 L1499.0 723.4 L1496.6 748.1 L1467.0 777.0" fill="none" stroke="#c5d0de" stroke-width="1.7" stroke-linejoin="round" stroke-linecap="round"/>
<path d="M1447.2 619.6 L1442.3 629.5 L1437.3 643.0" fill="none" stroke="#c5d0de" stroke-width="1.7" stroke-linejoin="round" stroke-linecap="round"/>
<path d="M1348.4 713.5 L1368.1 688.8 L1343.4 678.9 L1301.4 676.4" fill="none" stroke="#c5d0de" stroke-width="1.7" stroke-linejoin="round" stroke-linecap="round"/>
<path d="M1417.5 723.4 L1454.6 733.3 L1499.0 748.1" fill="none" stroke="#c5d0de" stroke-width="1.7" stroke-linejoin="round" stroke-linecap="round"/>
<path d="M1250.0 700.0 L1300.0 720.0 L1380.0 740.0" fill="none" stroke="#c5d0de" stroke-width="1.7" stroke-linejoin="round" stroke-linecap="round"/>
<path d="M1060.0 700.0 L1100.0 740.0 L1140.0 760.0" fill="none" stroke="#c5d0de" stroke-width="1.7" stroke-linejoin="round" stroke-linecap="round"/>
<path d="M1149.4 215.4 L1144.5 232.7 L1132.0 269.8 L1122.3 292.0 L1119.8 311.8 L1127.2 331.5 L1132.0 361.2 L1135.8 381.0 L1134.6 400.0 L1137.0 432.0 L1142.0 456.8 L1137.0 474.1 L1137.0 516.1 L1144.5 545.8 L1147.0 558.1 L1137.0 573.0 L1134.6 592.0" fill="none" stroke="#b7c4d3" stroke-width="4.2" stroke-linejoin="round" stroke-linecap="round"/>
<path d="M824.4 375.2 L851.4 374.2 L861.0 347.2 L876.5 353.0 L899.7 366.5 L915.0 374.2 L925.8 395.8 L940.0 420.0 L960.0 430.0 L974.0 429.7 L998.7 442.0 L1013.5 449.4 L1038.2 456.8 L1055.5 474.1 L1080.3 491.4 L1102.5 508.7 L1119.8 516.1 L1134.6 518.6" fill="none" stroke="#b7c4d3" stroke-width="4.2" stroke-linejoin="round" stroke-linecap="round"/>
<path d="M967.8 341.4 L974.0 339.0 L991.3 319.2 L1006.0 329.0 L1023.4 348.8 L1038.2 361.2 L1045.7 381.0 L1060.5 390.9 L1080.3 398.3 L1107.4 381.0 L1129.7 361.2" fill="none" stroke="#b7c4d3" stroke-width="4.2" stroke-linejoin="round" stroke-linecap="round"/>
<path d="M1169.2 518.6 L1184.0 506.3 L1203.8 489.0 L1211.2 464.2 L1231.0 434.6 L1245.8 400.0 L1258.0 381.0 L1278.0 361.2 L1294.0 331.5 L1304.0 321.7 L1311.3 306.8 L1308.8 289.5 L1297.7 269.8 L1299.0 240.0 L1294.0 222.8 L1270.0 214.0 L1256.0 208.0" fill="none" stroke="#b7c4d3" stroke-width="4.2" stroke-linejoin="round" stroke-linecap="round"/>
<path d="M1326.0 279.7 L1331.0 292.0 L1338.5 292.0 L1348.4 304.4 L1360.7 331.5 L1363.2 356.3 L1368.0 381.0 L1378.0 400.0 L1385.4 424.7 L1385.4 451.9 L1395.3 459.3 L1400.3 491.4 L1397.8 506.3 L1385.4 516.1 L1375.5 526.0 L1365.7 540.8 L1358.2 555.7 L1360.7 573.0 L1355.8 592.0 L1350.8 610.0 L1340.0 625.0" fill="none" stroke="#b7c4d3" stroke-width="4.2" stroke-linejoin="round" stroke-linecap="round"/>
<path d="M1385.4 451.9 L1410.0 454.4 L1442.3 464.2 L1452.0 469.2 L1459.6 491.4 L1467.0 479.0 L1489.2 471.7 L1501.6 466.7 L1504.0 449.4 L1506.5 419.8 L1509.0 400.0 L1531.2 417.3 L1560.9 439.5 L1560.9 461.8 L1568.3 498.8 L1565.8 523.5 L1556.0 535.9 L1541.0 555.7 L1533.7 573.0 L1516.4 592.0 L1500.0 605.0 L1480.0 610.0" fill="none" stroke="#b7c4d3" stroke-width="4.2" stroke-linejoin="round" stroke-linecap="round"/>
<path d="M1191.4 533.4 L1221.0 538.4 L1236.0 548.3 L1253.2 553.2 L1270.5 560.6 L1294.0 568.0 L1318.7 568.0 L1355.8 555.7 L1375.5 548.3" fill="none" stroke="#b7c4d3" stroke-width="4.2" stroke-linejoin="round" stroke-linecap="round"/>
<path d="M1236.0 548.3 L1260.0 565.0 L1290.0 582.0 L1318.7 609.7 L1355.8 634.4 L1392.8 651.7 L1429.9 671.5 L1454.6 678.9 L1491.7 686.3 L1516.4 701.1 L1541.0 720.9 L1553.5 725.8 L1578.2 718.4 L1600.4 711.0 L1620.0 705.0" fill="none" stroke="#b7c4d3" stroke-width="4.2" stroke-linejoin="round" stroke-linecap="round"/>
<path d="M1294.0 590.0 L1333.5 590.0 L1392.8 599.8 L1467.0 609.7 L1476.8 599.8 L1479.3 585.0 L1490.0 570.0" fill="none" stroke="#b7c4d3" stroke-width="4.2" stroke-linejoin="round" stroke-linecap="round"/>
<path d="M1355.8 641.8 L1427.4 643.0 L1454.6 654.2 L1516.4 644.3 L1565.8 646.8 L1602.9 646.8 L1640.0 640.0 L1683.0 629.5 L1702.8 632.0" fill="none" stroke="#b7c4d3" stroke-width="4.2" stroke-linejoin="round" stroke-linecap="round"/>
<path d="M979.0 669.0 L998.7 654.2 L1023.4 646.8 L1085.2 634.4 L1107.4 614.7 L1122.3 597.4 L1134.6 585.0 L1137.0 573.0" fill="none" stroke="#b7c4d3" stroke-width="4.2" stroke-linejoin="round" stroke-linecap="round"/>
<path d="M1048.0 678.9 L1072.8 669.0 L1090.0 664.1 L1102.5 669.0 L1107.4 688.8 L1122.3 708.5 L1147.0 718.4 L1176.6 720.9 L1201.3 723.4" fill="none" stroke="#b7c4d3" stroke-width="4.2" stroke-linejoin="round" stroke-linecap="round"/>
<path d="M1189.0 560.6 L1196.4 577.9 L1184.0 609.7 L1179.0 646.8 L1171.7 676.4 L1184.0 698.7 L1201.3 723.4" fill="none" stroke="#b7c4d3" stroke-width="4.2" stroke-linejoin="round" stroke-linecap="round"/>
<path d="M1590.0 568.0 L1607.0 570.6 L1635.0 582.0 L1692.0 582.0 L1703.0 587.6" fill="none" stroke="#b7c4d3" stroke-width="4.2" stroke-linejoin="round" stroke-linecap="round"/>
<path d="M1607.0 573.5 L1615.4 607.4 L1595.6 627.3 L1604.0 644.3" fill="none" stroke="#b7c4d3" stroke-width="4.2" stroke-linejoin="round" stroke-linecap="round"/>
<path d="M1567.0 480.0 L1567.0 522.5 L1541.8 553.6 L1513.5 579.0 L1507.8 599.0" fill="none" stroke="#b7c4d3" stroke-width="4.2" stroke-linejoin="round" stroke-linecap="round"/>
<path d="M1149.4 215.4 L1144.5 232.7 L1132.0 269.8 L1122.3 292.0 L1119.8 311.8 L1127.2 331.5 L1132.0 361.2 L1135.8 381.0 L1134.6 400.0 L1137.0 432.0 L1142.0 456.8 L1137.0 474.1 L1137.0 516.1 L1144.5 545.8 L1147.0 558.1 L1137.0 573.0 L1134.6 592.0" fill="none" stroke="#dfe5ec" stroke-width="2.0" stroke-linejoin="round" stroke-linecap="round"/>
<path d="M824.4 375.2 L851.4 374.2 L861.0 347.2 L876.5 353.0 L899.7 366.5 L915.0 374.2 L925.8 395.8 L940.0 420.0 L960.0 430.0 L974.0 429.7 L998.7 442.0 L1013.5 449.4 L1038.2 456.8 L1055.5 474.1 L1080.3 491.4 L1102.5 508.7 L1119.8 516.1 L1134.6 518.6" fill="none" stroke="#dfe5ec" stroke-width="2.0" stroke-linejoin="round" stroke-linecap="round"/>
<path d="M967.8 341.4 L974.0 339.0 L991.3 319.2 L1006.0 329.0 L1023.4 348.8 L1038.2 361.2 L1045.7 381.0 L1060.5 390.9 L1080.3 398.3 L1107.4 381.0 L1129.7 361.2" fill="none" stroke="#dfe5ec" stroke-width="2.0" stroke-linejoin="round" stroke-linecap="round"/>
<path d="M1169.2 518.6 L1184.0 506.3 L1203.8 489.0 L1211.2 464.2 L1231.0 434.6 L1245.8 400.0 L1258.0 381.0 L1278.0 361.2 L1294.0 331.5 L1304.0 321.7 L1311.3 306.8 L1308.8 289.5 L1297.7 269.8 L1299.0 240.0 L1294.0 222.8 L1270.0 214.0 L1256.0 208.0" fill="none" stroke="#dfe5ec" stroke-width="2.0" stroke-linejoin="round" stroke-linecap="round"/>
<path d="M1326.0 279.7 L1331.0 292.0 L1338.5 292.0 L1348.4 304.4 L1360.7 331.5 L1363.2 356.3 L1368.0 381.0 L1378.0 400.0 L1385.4 424.7 L1385.4 451.9 L1395.3 459.3 L1400.3 491.4 L1397.8 506.3 L1385.4 516.1 L1375.5 526.0 L1365.7 540.8 L1358.2 555.7 L1360.7 573.0 L1355.8 592.0 L1350.8 610.0 L1340.0 625.0" fill="none" stroke="#dfe5ec" stroke-width="2.0" stroke-linejoin="round" stroke-linecap="round"/>
<path d="M1385.4 451.9 L1410.0 454.4 L1442.3 464.2 L1452.0 469.2 L1459.6 491.4 L1467.0 479.0 L1489.2 471.7 L1501.6 466.7 L1504.0 449.4 L1506.5 419.8 L1509.0 400.0 L1531.2 417.3 L1560.9 439.5 L1560.9 461.8 L1568.3 498.8 L1565.8 523.5 L1556.0 535.9 L1541.0 555.7 L1533.7 573.0 L1516.4 592.0 L1500.0 605.0 L1480.0 610.0" fill="none" stroke="#dfe5ec" stroke-width="2.0" stroke-linejoin="round" stroke-linecap="round"/>
<path d="M1191.4 533.4 L1221.0 538.4 L1236.0 548.3 L1253.2 553.2 L1270.5 560.6 L1294.0 568.0 L1318.7 568.0 L1355.8 555.7 L1375.5 548.3" fill="none" stroke="#dfe5ec" stroke-width="2.0" stroke-linejoin="round" stroke-linecap="round"/>
<path d="M1236.0 548.3 L1260.0 565.0 L1290.0 582.0 L1318.7 609.7 L1355.8 634.4 L1392.8 651.7 L1429.9 671.5 L1454.6 678.9 L1491.7 686.3 L1516.4 701.1 L1541.0 720.9 L1553.5 725.8 L1578.2 718.4 L1600.4 711.0 L1620.0 705.0" fill="none" stroke="#dfe5ec" stroke-width="2.0" stroke-linejoin="round" stroke-linecap="round"/>
<path d="M1294.0 590.0 L1333.5 590.0 L1392.8 599.8 L1467.0 609.7 L1476.8 599.8 L1479.3 585.0 L1490.0 570.0" fill="none" stroke="#dfe5ec" stroke-width="2.0" stroke-linejoin="round" stroke-linecap="round"/>
<path d="M1355.8 641.8 L1427.4 643.0 L1454.6 654.2 L1516.4 644.3 L1565.8 646.8 L1602.9 646.8 L1640.0 640.0 L1683.0 629.5 L1702.8 632.0" fill="none" stroke="#dfe5ec" stroke-width="2.0" stroke-linejoin="round" stroke-linecap="round"/>
<path d="M979.0 669.0 L998.7 654.2 L1023.4 646.8 L1085.2 634.4 L1107.4 614.7 L1122.3 597.4 L1134.6 585.0 L1137.0 573.0" fill="none" stroke="#dfe5ec" stroke-width="2.0" stroke-linejoin="round" stroke-linecap="round"/>
<path d="M1048.0 678.9 L1072.8 669.0 L1090.0 664.1 L1102.5 669.0 L1107.4 688.8 L1122.3 708.5 L1147.0 718.4 L1176.6 720.9 L1201.3 723.4" fill="none" stroke="#dfe5ec" stroke-width="2.0" stroke-linejoin="round" stroke-linecap="round"/>
<path d="M1189.0 560.6 L1196.4 577.9 L1184.0 609.7 L1179.0 646.8 L1171.7 676.4 L1184.0 698.7 L1201.3 723.4" fill="none" stroke="#dfe5ec" stroke-width="2.0" stroke-linejoin="round" stroke-linecap="round"/>
<path d="M1590.0 568.0 L1607.0 570.6 L1635.0 582.0 L1692.0 582.0 L1703.0 587.6" fill="none" stroke="#dfe5ec" stroke-width="2.0" stroke-linejoin="round" stroke-linecap="round"/>
<path d="M1607.0 573.5 L1615.4 607.4 L1595.6 627.3 L1604.0 644.3" fill="none" stroke="#dfe5ec" stroke-width="2.0" stroke-linejoin="round" stroke-linecap="round"/>
<path d="M1567.0 480.0 L1567.0 522.5 L1541.8 553.6 L1513.5 579.0 L1507.8 599.0" fill="none" stroke="#dfe5ec" stroke-width="2.0" stroke-linejoin="round" stroke-linecap="round"/>
</svg>
<svg width="1265" height="569" viewBox="654 208 1265 569" style="position:absolute;left:0;top:0;font-family:'Liberation Sans',sans-serif">
<defs><filter id="sh" x="-30%" y="-30%" width="160%" height="160%"><feDropShadow dx="0" dy="1" stdDeviation="1" flood-color="#000" flood-opacity="0.35"/></filter><filter id="cs" x="-20%" y="-20%" width="140%" height="140%"><feDropShadow dx="0" dy="1" stdDeviation="1.5" flood-color="#000" flood-opacity="0.3"/></filter></defs>
<text x="1086.2" y="313.6" font-size="17.5" fill="#2a2a2a" font-weight="normal" font-style="normal" stroke="#fff" stroke-width="3.6" paint-order="stroke" stroke-linejoin="round" text-anchor="start" textLength="62" lengthAdjust="spacingAndGlyphs">Żebbuġ</text>
<text x="1086.2" y="313.6" font-size="17.5" fill="#2a2a2a" stroke="#2a2a2a" stroke-width="0.55" textLength="62" lengthAdjust="spacingAndGlyphs">Żebbuġ</text>
<text x="988.5" y="349" font-size="17.5" fill="#2a2a2a" font-weight="normal" font-style="normal" stroke="#fff" stroke-width="3.6" paint-order="stroke" stroke-linejoin="round" text-anchor="start" textLength="53.7" lengthAdjust="spacingAndGlyphs">Għasri</text>
<text x="988.5" y="349" font-size="17.5" fill="#2a2a2a" stroke="#2a2a2a" stroke-width="0.55" textLength="53.7" lengthAdjust="spacingAndGlyphs">Għasri</text>
<text x="890.5" y="384.7" font-size="17.5" fill="#2a2a2a" font-weight="normal" font-style="normal" stroke="#fff" stroke-width="3.6" paint-order="stroke" stroke-linejoin="round" text-anchor="start" textLength="49.8" lengthAdjust="spacingAndGlyphs">Għarb</text>
<text x="890.5" y="384.7" font-size="17.5" fill="#2a2a2a" stroke="#2a2a2a" stroke-width="0.55" textLength="49.8" lengthAdjust="spacingAndGlyphs">Għarb</text>
<text x="1135" y="532" font-size="17.5" fill="#2a2a2a" font-weight="normal" font-style="normal" stroke="#fff" stroke-width="3.6" paint-order="stroke" stroke-linejoin="round" text-anchor="start" textLength="63.7" lengthAdjust="spacingAndGlyphs">Victoria</text>
<text x="1135" y="532" font-size="17.5" fill="#2a2a2a" stroke="#2a2a2a" stroke-width="0.55" textLength="63.7" lengthAdjust="spacingAndGlyphs">Victoria</text>
<text x="1025.7" y="561.4" font-size="17.5" fill="#2a2a2a" font-weight="normal" font-style="normal" stroke="#fff" stroke-width="3.6" paint-order="stroke" stroke-linejoin="round" text-anchor="start" textLength="63" lengthAdjust="spacingAndGlyphs">Kerċem</text>
<text x="1025.7" y="561.4" font-size="17.5" fill="#2a2a2a" stroke="#2a2a2a" stroke-width="0.55" textLength="63" lengthAdjust="spacingAndGlyphs">Kerċem</text>
<text x="1095.7" y="660.3" font-size="17.5" fill="#2a2a2a" font-weight="normal" font-style="normal" stroke="#fff" stroke-width="3.6" paint-order="stroke" stroke-linejoin="round" text-anchor="start" textLength="62.5" lengthAdjust="spacingAndGlyphs">Munxar</text>
<text x="1095.7" y="660.3" font-size="17.5" fill="#2a2a2a" stroke="#2a2a2a" stroke-width="0.55" textLength="62.5" lengthAdjust="spacingAndGlyphs">Munxar</text>
<text x="1320.3" y="480.5" font-size="17.5" fill="#2a2a2a" font-weight="normal" font-style="normal" stroke="#fff" stroke-width="3.6" paint-order="stroke" stroke-linejoin="round" text-anchor="start" textLength="60.2" lengthAdjust="spacingAndGlyphs">Xagħra</text>
<text x="1320.3" y="480.5" font-size="17.5" fill="#2a2a2a" stroke="#2a2a2a" stroke-width="0.55" textLength="60.2" lengthAdjust="spacingAndGlyphs">Xagħra</text>
<text x="1550.3" y="596.7" font-size="17.5" fill="#2a2a2a" font-weight="normal" font-style="normal" stroke="#fff" stroke-width="3.6" paint-order="stroke" stroke-linejoin="round" text-anchor="start" textLength="50.4" lengthAdjust="spacingAndGlyphs">Nadur</text>
<text x="1550.3" y="596.7" font-size="17.5" fill="#2a2a2a" stroke="#2a2a2a" stroke-width="0.55" textLength="50.4" lengthAdjust="spacingAndGlyphs">Nadur</text>
<text x="1687.6" y="629" font-size="17.5" fill="#2a2a2a" font-weight="normal" font-style="normal" stroke="#fff" stroke-width="3.6" paint-order="stroke" stroke-linejoin="round" text-anchor="start" textLength="36.8" lengthAdjust="spacingAndGlyphs">Qala</text>
<text x="1687.6" y="629" font-size="17.5" fill="#2a2a2a" stroke="#2a2a2a" stroke-width="0.55" textLength="36.8" lengthAdjust="spacingAndGlyphs">Qala</text>
<text x="1174.6" y="735.2" font-size="17.5" fill="#2a2a2a" font-weight="normal" font-style="normal" stroke="#fff" stroke-width="3.6" paint-order="stroke" stroke-linejoin="round" text-anchor="start" textLength="58.4" lengthAdjust="spacingAndGlyphs">Sannat</text>
<text x="1174.6" y="735.2" font-size="17.5" fill="#2a2a2a" stroke="#2a2a2a" stroke-width="0.55" textLength="58.4" lengthAdjust="spacingAndGlyphs">Sannat</text>
<text x="1291" y="653" font-size="17.5" fill="#2a2a2a" font-weight="normal" font-style="normal" stroke="#fff" stroke-width="3.6" paint-order="stroke" stroke-linejoin="round" text-anchor="start" textLength="63" lengthAdjust="spacingAndGlyphs">Xewkija</text>
<text x="1291" y="653" font-size="17.5" fill="#2a2a2a" stroke="#2a2a2a" stroke-width="0.55" textLength="63" lengthAdjust="spacingAndGlyphs">Xewkija</text>
<text x="1472.4" y="716" font-size="17.5" fill="#2a2a2a" font-weight="normal" font-style="normal" stroke="#fff" stroke-width="3.6" paint-order="stroke" stroke-linejoin="round" text-anchor="start" textLength="103.3" lengthAdjust="spacingAndGlyphs">Ghajnsielem</text>
<text x="1472.4" y="716" font-size="17.5" fill="#2a2a2a" stroke="#2a2a2a" stroke-width="0.55" textLength="103.3" lengthAdjust="spacingAndGlyphs">Ghajnsielem</text>
<text x="1226.5" y="535.9" font-size="18.5" fill="#2a2a2a" font-weight="normal" font-style="italic" stroke="#fff" stroke-width="3.2" paint-order="stroke" stroke-linejoin="round" text-anchor="start" textLength="41" lengthAdjust="spacingAndGlyphs">Gozo</text>
<text x="1236.1" y="267.4" font-size="13" fill="#444" font-weight="normal" font-style="normal" stroke="#fff" stroke-width="3.2" paint-order="stroke" stroke-linejoin="round" text-anchor="start" textLength="90.3" lengthAdjust="spacingAndGlyphs" letter-spacing="1.5">MARSALFORN</text>
<text x="1123" y="611.2" font-size="13.5" fill="#333" font-weight="normal" font-style="normal" stroke="#fff" stroke-width="3.2" paint-order="stroke" stroke-linejoin="round" text-anchor="start" textLength="94" lengthAdjust="spacingAndGlyphs" letter-spacing="2">TAĊ-ĊAWLA</text>
<text x="954.5" y="667.5" font-size="13" fill="#333" font-weight="normal" font-style="normal" stroke="#fff" stroke-width="3.2" paint-order="stroke" stroke-linejoin="round" text-anchor="start" textLength="57.6" lengthAdjust="spacingAndGlyphs" letter-spacing="2">XLENDI</text>
<text x="1591" y="726.3" font-size="13" fill="#333" font-weight="normal" font-style="normal" stroke="#fff" stroke-width="3.2" paint-order="stroke" stroke-linejoin="round" text-anchor="start" textLength="57.3" lengthAdjust="spacingAndGlyphs" letter-spacing="2">MGARR</text>
<text x="1236.1" y="267.4" font-size="13" fill="#333" stroke="#333" stroke-width="0.45" letter-spacing="2" textLength="90.3" lengthAdjust="spacingAndGlyphs">MARSALFORN</text>
<text x="1123" y="611.2" font-size="13" fill="#333" stroke="#333" stroke-width="0.45" letter-spacing="2" textLength="94" lengthAdjust="spacingAndGlyphs">TAĊ-ĊAWLA</text>
<text x="954.5" y="667.5" font-size="13" fill="#333" stroke="#333" stroke-width="0.45" letter-spacing="2" textLength="57.6" lengthAdjust="spacingAndGlyphs">XLENDI</text>
<text x="1591" y="726.3" font-size="13" fill="#333" stroke="#333" stroke-width="0.45" letter-spacing="2" textLength="57.3" lengthAdjust="spacingAndGlyphs">MGARR</text>
<text x="1027" y="647" font-size="14" fill="#333" font-weight="normal" font-style="normal" stroke="#fff" stroke-width="3.2" paint-order="stroke" stroke-linejoin="round" text-anchor="start" textLength="86" lengthAdjust="spacingAndGlyphs" transform="rotate(-22 1027 647)">Triq tal-Ghajn</text>
<text x="975" y="681" font-size="14" fill="#333" font-weight="normal" font-style="normal" stroke="#fff" stroke-width="3.2" paint-order="stroke" stroke-linejoin="round" text-anchor="start" textLength="88" lengthAdjust="spacingAndGlyphs" transform="rotate(8 975 681)">Triq Il Qsajjem</text>
<text x="1238" y="563" font-size="14" fill="#333" font-weight="normal" font-style="normal" stroke="#fff" stroke-width="3.2" paint-order="stroke" stroke-linejoin="round" text-anchor="start" textLength="66" lengthAdjust="spacingAndGlyphs" transform="rotate(34 1238 563)">Triq L-Imġ</text>
<text x="1391" y="605" font-size="14" fill="#333" font-weight="normal" font-style="normal" stroke="#fff" stroke-width="3.2" paint-order="stroke" stroke-linejoin="round" text-anchor="start" textLength="76" lengthAdjust="spacingAndGlyphs" transform="rotate(3 1391 605)">Triq Ir Rabat</text>
<text x="1258" y="388" font-size="13.5" fill="#333" font-weight="normal" font-style="normal" stroke="#fff" stroke-width="3.2" paint-order="stroke" stroke-linejoin="round" text-anchor="start" textLength="78" lengthAdjust="spacingAndGlyphs" transform="rotate(-53 1258 388)">Triq Ir-Rabat</text>
<text x="1362" y="347" font-size="13.5" fill="#333" font-weight="normal" font-style="normal" stroke="#fff" stroke-width="3.2" paint-order="stroke" stroke-linejoin="round" text-anchor="start" textLength="92" lengthAdjust="spacingAndGlyphs" transform="rotate(73 1362 347)">Triq Marsalforn</text>
<text x="654" y="313" font-size="18.5" fill="#8d3fd6" font-weight="normal" font-style="normal" stroke="#fff" stroke-width="3.2" paint-order="stroke" stroke-linejoin="round" text-anchor="start" textLength="57" lengthAdjust="spacingAndGlyphs">set cliff</text>
<text x="654" y="433.4" font-size="18.5" fill="#8d3fd6" font-weight="normal" font-style="normal" stroke="#fff" stroke-width="3.2" paint-order="stroke" stroke-linejoin="round" text-anchor="start" textLength="89" lengthAdjust="spacingAndGlyphs">e Viewpoint</text>
<text x="931" y="421.7" font-size="18.5" fill="#de3cbf" font-weight="normal" font-style="normal" stroke="#fff" stroke-width="3.2" paint-order="stroke" stroke-linejoin="round" text-anchor="start" textLength="136.7" lengthAdjust="spacingAndGlyphs">Kempinski Hotel</text>
<text x="931" y="439.8" font-size="18.5" fill="#de3cbf" font-weight="normal" font-style="normal" stroke="#fff" stroke-width="3.2" paint-order="stroke" stroke-linejoin="round" text-anchor="start" textLength="158.7" lengthAdjust="spacingAndGlyphs">San Lawrenz Malta</text>
<text x="1376.8" y="351.8" font-size="18.5" fill="#1b8a5a" font-weight="normal" font-style="normal" stroke="#fff" stroke-width="3.2" paint-order="stroke" stroke-linejoin="round" text-anchor="start" textLength="108.7" lengthAdjust="spacingAndGlyphs">Ramla Beach</text>
<text x="1569.6" y="334.4" font-size="18.5" fill="#8d3fd6" font-weight="normal" font-style="normal" stroke="#fff" stroke-width="3.2" paint-order="stroke" stroke-linejoin="round" text-anchor="start" textLength="92.6" lengthAdjust="spacingAndGlyphs">Mixta Cave</text>
<text x="1472.3" y="396.1" font-size="18.5" fill="#8d3fd6" font-weight="normal" font-style="normal" stroke="#fff" stroke-width="3.2" paint-order="stroke" stroke-linejoin="round" text-anchor="start" textLength="141.7" lengthAdjust="spacingAndGlyphs">Bajja ta' San Blas</text>
<text x="1688" y="464.7" font-size="18.5" fill="#1b8a5a" font-weight="normal" font-style="normal" stroke="#fff" stroke-width="3.2" paint-order="stroke" stroke-linejoin="round" text-anchor="start" textLength="53" lengthAdjust="spacingAndGlyphs">Daħlet</text>
<text x="1632.4" y="483.5" font-size="18.5" fill="#1b8a5a" font-weight="normal" font-style="normal" stroke="#fff" stroke-width="3.2" paint-order="stroke" stroke-linejoin="round" text-anchor="start" textLength="108.6" lengthAdjust="spacingAndGlyphs">Qorrot Beach</text>
<text x="1470.7" y="664.1" font-size="18.5" fill="#d8650d" font-weight="normal" font-style="normal" stroke="#fff" stroke-width="3.2" paint-order="stroke" stroke-linejoin="round" text-anchor="start" textLength="132.2" lengthAdjust="spacingAndGlyphs">Country Terrace</text>
<text x="1453.4" y="682.6" font-size="18.5" fill="#d8650d" font-weight="normal" font-style="normal" stroke="#fff" stroke-width="3.2" paint-order="stroke" stroke-linejoin="round" text-anchor="start" textLength="149.6" lengthAdjust="spacingAndGlyphs">Mgarr Gozo Malta</text>
<text x="1717.6" y="667.8" font-size="18.5" fill="#1b8a5a" font-weight="normal" font-style="normal" stroke="#fff" stroke-width="3.2" paint-order="stroke" stroke-linejoin="round" text-anchor="start" textLength="65.4" lengthAdjust="spacingAndGlyphs">Hondoq</text>
<text x="1688" y="686.3" font-size="18.5" fill="#1b8a5a" font-weight="normal" font-style="normal" stroke="#fff" stroke-width="3.2" paint-order="stroke" stroke-linejoin="round" text-anchor="start" textLength="95" lengthAdjust="spacingAndGlyphs">ir-Rummien</text>
<text x="1280" y="749.3" font-size="18.5" fill="#1b8a5a" font-weight="normal" font-style="normal" stroke="#fff" stroke-width="3.2" paint-order="stroke" stroke-linejoin="round" text-anchor="start" textLength="103" lengthAdjust="spacingAndGlyphs">Mġarr ix-Xini</text>
<text x="893" y="747.3" font-size="18.5" fill="#8d3fd6" font-weight="normal" font-style="normal" stroke="#fff" stroke-width="3.2" paint-order="stroke" stroke-linejoin="round" text-anchor="start" textLength="103" lengthAdjust="spacingAndGlyphs">Sanap Cliffs</text>
<g filter="url(#sh)"><path d="M716.3 304.4 A15.5 15.5 0 1 1 747.3 304.4 C747.3 313.4 737.8 317.4 731.8 323.4 C725.8 317.4 716.3 313.4 716.3 304.4 Z" fill="#fff"/></g><circle cx="731.8" cy="304.4" r="13" fill="#b56cf4"/><g transform="translate(731.8 304.4)" fill="#fff"><path d="M-7.5 -3.5 L-3.5 -3.5 L-2 -5.5 L3 -5.5 L4.5 -3.5 L7.5 -3.5 L7.5 6 L-7.5 6 Z"/><circle cx="0" cy="1.2" r="3" fill="#b56cf4"/><circle cx="0" cy="1.2" r="1.5"/><path d="M-7 -8 L-7 -4.5 M-8.7 -6.2 L-5.3 -6.2" stroke="#fff" stroke-width="1.2"/></g>
<g filter="url(#sh)"><path d="M749.2 424.7 A15.5 15.5 0 1 1 780.2 424.7 C780.2 433.7 770.7 437.7 764.7 443.7 C758.7 437.7 749.2 433.7 749.2 424.7 Z" fill="#fff"/></g><circle cx="764.7" cy="424.7" r="13" fill="#b56cf4"/><g transform="translate(764.7 424.7)" fill="#fff"><path d="M-7.5 -3.5 L-3.5 -3.5 L-2 -5.5 L3 -5.5 L4.5 -3.5 L7.5 -3.5 L7.5 6 L-7.5 6 Z"/><circle cx="0" cy="1.2" r="3" fill="#b56cf4"/><circle cx="0" cy="1.2" r="1.5"/><path d="M-7 -8 L-7 -4.5 M-8.7 -6.2 L-5.3 -6.2" stroke="#fff" stroke-width="1.2"/></g>
<g filter="url(#sh)"><path d="M894.1 421.3 A15.5 15.5 0 1 1 925.1 421.3 C925.1 430.3 915.6 434.3 909.6 440.3 C903.6 434.3 894.1 430.3 894.1 421.3 Z" fill="#fff"/></g><circle cx="909.6" cy="421.3" r="13" fill="#e64fc8"/><g transform="translate(909.6 421.3)" fill="#fff"><path d="M-8 -6 L-8 6 M-8 3 L8 3 L8 6 M-8 0 L8 0 L8 -2 Q8 -4 6 -4 L-1 -4 L-1 0" stroke="#fff" stroke-width="1.8" fill="none"/><circle cx="-4.5" cy="-2.5" r="2"/></g>
<g filter="url(#sh)"><path d="M1490.5 342.7 A15.5 15.5 0 1 1 1521.5 342.7 C1521.5 351.7 1512 355.7 1506 361.7 C1500 355.7 1490.5 351.7 1490.5 342.7 Z" fill="#fff"/></g><circle cx="1506" cy="342.7" r="13" fill="#1e9a67"/><g transform="translate(1506 342.7)" fill="#fff"><path d="M-7 7 L3 -3" stroke="#fff" stroke-width="1.8"/><path d="M-3.5 -6.5 A8.5 8.5 0 0 1 8.5 5.5 Z"/><path d="M0.5 -2.5 L5 2" stroke="#1e9a67" stroke-width="1.2"/><circle cx="-5.5" cy="-1" r="2.2"/></g>
<g filter="url(#sh)"><path d="M1533.6 324.3 A15.5 15.5 0 1 1 1564.6 324.3 C1564.6 333.3 1555.1 337.3 1549.1 343.3 C1543.1 337.3 1533.6 333.3 1533.6 324.3 Z" fill="#fff"/></g><circle cx="1549.1" cy="324.3" r="13" fill="#b56cf4"/><g transform="translate(1549.1 324.3)" fill="#fff"><path d="M-7.5 -3.5 L-3.5 -3.5 L-2 -5.5 L3 -5.5 L4.5 -3.5 L7.5 -3.5 L7.5 6 L-7.5 6 Z"/><circle cx="0" cy="1.2" r="3" fill="#b56cf4"/><circle cx="0" cy="1.2" r="1.5"/><path d="M-7 -8 L-7 -4.5 M-8.7 -6.2 L-5.3 -6.2" stroke="#fff" stroke-width="1.2"/></g>
<g filter="url(#sh)"><path d="M1618.5 387.3 A15.5 15.5 0 1 1 1649.5 387.3 C1649.5 396.3 1640 400.3 1634 406.3 C1628 400.3 1618.5 396.3 1618.5 387.3 Z" fill="#fff"/></g><circle cx="1634" cy="387.3" r="13" fill="#b56cf4"/><g transform="translate(1634 387.3)" fill="#fff"><path d="M-7.5 -3.5 L-3.5 -3.5 L-2 -5.5 L3 -5.5 L4.5 -3.5 L7.5 -3.5 L7.5 6 L-7.5 6 Z"/><circle cx="0" cy="1.2" r="3" fill="#b56cf4"/><circle cx="0" cy="1.2" r="1.5"/><path d="M-7 -8 L-7 -4.5 M-8.7 -6.2 L-5.3 -6.2" stroke="#fff" stroke-width="1.2"/></g>
<g filter="url(#sh)"><path d="M1745.8 464.7 A15.5 15.5 0 1 1 1776.8 464.7 C1776.8 473.7 1767.3 477.7 1761.3 483.7 C1755.3 477.7 1745.8 473.7 1745.8 464.7 Z" fill="#fff"/></g><circle cx="1761.3" cy="464.7" r="13" fill="#1e9a67"/><g transform="translate(1761.3 464.7)" fill="#fff"><path d="M-7 7 L3 -3" stroke="#fff" stroke-width="1.8"/><path d="M-3.5 -6.5 A8.5 8.5 0 0 1 8.5 5.5 Z"/><path d="M0.5 -2.5 L5 2" stroke="#1e9a67" stroke-width="1.2"/><circle cx="-5.5" cy="-1" r="2.2"/></g>
<g filter="url(#sh)"><path d="M1608.4 665.5 A15.5 15.5 0 1 1 1639.4 665.5 C1639.4 674.5 1629.9 678.5 1623.9 684.5 C1617.9 678.5 1608.4 674.5 1608.4 665.5 Z" fill="#fff"/></g><circle cx="1623.9" cy="665.5" r="13" fill="#f28a22"/><g transform="translate(1623.9 665.5)" fill="#fff"><path d="M-5 -7 L-5 -2 Q-5 0 -3.5 0.5 L-3.5 8 M-2 -7 L-2 -2 Q-2 0 -3.5 0.5 M-3.5 -7 L-3.5 -1" stroke="#fff" stroke-width="1.5" fill="none"/><path d="M3 8 L3 -7 Q6 -5 6 1 L3.5 1" stroke="#fff" stroke-width="1.8" fill="none"/></g>
<g filter="url(#sh)"><path d="M1788.5 667.8 A15.5 15.5 0 1 1 1819.5 667.8 C1819.5 676.8 1810 680.8 1804 686.8 C1798 680.8 1788.5 676.8 1788.5 667.8 Z" fill="#fff"/></g><circle cx="1804" cy="667.8" r="13" fill="#1e9a67"/><g transform="translate(1804 667.8)" fill="#fff"><path d="M-7 7 L3 -3" stroke="#fff" stroke-width="1.8"/><path d="M-3.5 -6.5 A8.5 8.5 0 0 1 8.5 5.5 Z"/><path d="M0.5 -2.5 L5 2" stroke="#1e9a67" stroke-width="1.2"/><circle cx="-5.5" cy="-1" r="2.2"/></g>
<g filter="url(#sh)"><path d="M1390.9 741.9 A15.5 15.5 0 1 1 1421.9 741.9 C1421.9 750.9 1412.4 754.9 1406.4 760.9 C1400.4 754.9 1390.9 750.9 1390.9 741.9 Z" fill="#fff"/></g><circle cx="1406.4" cy="741.9" r="13" fill="#1e9a67"/><g transform="translate(1406.4 741.9)" fill="#fff"><path d="M-7 7 L3 -3" stroke="#fff" stroke-width="1.8"/><path d="M-3.5 -6.5 A8.5 8.5 0 0 1 8.5 5.5 Z"/><path d="M0.5 -2.5 L5 2" stroke="#1e9a67" stroke-width="1.2"/><circle cx="-5.5" cy="-1" r="2.2"/></g>
<g filter="url(#sh)"><path d="M1001.7 738.2 A15.5 15.5 0 1 1 1032.7 738.2 C1032.7 747.2 1023.2 751.2 1017.2 757.2 C1011.2 751.2 1001.7 747.2 1001.7 738.2 Z" fill="#fff"/></g><circle cx="1017.2" cy="738.2" r="13" fill="#b56cf4"/><g transform="translate(1017.2 738.2)" fill="#fff"><path d="M-6 7 L-6 4.5 L-4 4.5 L-4 -2 L-6 -3.5 L-6 -7 L-3.5 -7 L-3.5 -5 L-1.2 -5 L-1.2 -7 L1.2 -7 L1.2 -5 L3.5 -5 L3.5 -7 L6 -7 L6 -3.5 L4 -2 L4 4.5 L6 4.5 L6 7 Z"/></g>
<path transform="translate(1133.5 270.5)" d="M0 0 C-1.2 -9 -3.5 -14 -6.5 -18.5 C-9 -22 -12 -25 -12 -30 C-12 -36.6 -6.6 -42 0 -42 C6.6 -42 12 -36.6 12 -30 C12 -25 9 -22 6.5 -18.5 C3.5 -14 1.2 -9 0 0 Z" fill="#f56e5e" stroke="#2a1410" stroke-width="1.8" stroke-linejoin="round"/>
<path transform="translate(915 365.2)" d="M0 0 C-1.2 -9 -3.5 -14 -6.5 -18.5 C-9 -22 -12 -25 -12 -30 C-12 -36.6 -6.6 -42 0 -42 C6.6 -42 12 -36.6 12 -30 C12 -25 9 -22 6.5 -18.5 C3.5 -14 1.2 -9 0 0 Z" fill="#f56e5e" stroke="#2a1410" stroke-width="1.8" stroke-linejoin="round"/>
<path transform="translate(875.8 424)" d="M0 0 C-1.2 -9 -3.5 -14 -6.5 -18.5 C-9 -22 -12 -25 -12 -30 C-12 -36.6 -6.6 -42 0 -42 C6.6 -42 12 -36.6 12 -30 C12 -25 9 -22 6.5 -18.5 C3.5 -14 1.2 -9 0 0 Z" fill="#f56e5e" stroke="#2a1410" stroke-width="1.8" stroke-linejoin="round"/>
<path transform="translate(1062.1 392.3)" d="M0 0 C-1.2 -9 -3.5 -14 -6.5 -18.5 C-9 -22 -12 -25 -12 -30 C-12 -36.6 -6.6 -42 0 -42 C6.6 -42 12 -36.6 12 -30 C12 -25 9 -22 6.5 -18.5 C3.5 -14 1.2 -9 0 0 Z" fill="#f56e5e" stroke="#2a1410" stroke-width="1.8" stroke-linejoin="round"/>
<path transform="translate(1236.5 474)" d="M0 0 C-1.2 -9 -3.5 -14 -6.5 -18.5 C-9 -22 -12 -25 -12 -30 C-12 -36.6 -6.6 -42 0 -42 C6.6 -42 12 -36.6 12 -30 C12 -25 9 -22 6.5 -18.5 C3.5 -14 1.2 -9 0 0 Z" fill="#f56e5e" stroke="#2a1410" stroke-width="1.8" stroke-linejoin="round"/>
<path transform="translate(1373.8 471)" d="M0 0 C-1.2 -9 -3.5 -14 -6.5 -18.5 C-9 -22 -12 -25 -12 -30 C-12 -36.6 -6.6 -42 0 -42 C6.6 -42 12 -36.6 12 -30 C12 -25 9 -22 6.5 -18.5 C3.5 -14 1.2 -9 0 0 Z" fill="#f56e5e" stroke="#2a1410" stroke-width="1.8" stroke-linejoin="round"/>
<path transform="translate(1076.8 566)" d="M0 0 C-1.2 -9 -3.5 -14 -6.5 -18.5 C-9 -22 -12 -25 -12 -30 C-12 -36.6 -6.6 -42 0 -42 C6.6 -42 12 -36.6 12 -30 C12 -25 9 -22 6.5 -18.5 C3.5 -14 1.2 -9 0 0 Z" fill="#f56e5e" stroke="#2a1410" stroke-width="1.8" stroke-linejoin="round"/>
<path transform="translate(1176 605.4)" d="M0 0 C-1.2 -9 -3.5 -14 -6.5 -18.5 C-9 -22 -12 -25 -12 -30 C-12 -36.6 -6.6 -42 0 -42 C6.6 -42 12 -36.6 12 -30 C12 -25 9 -22 6.5 -18.5 C3.5 -14 1.2 -9 0 0 Z" fill="#f56e5e" stroke="#2a1410" stroke-width="1.8" stroke-linejoin="round"/>
<path transform="translate(1121.5 666.3)" d="M0 0 C-1.2 -9 -3.5 -14 -6.5 -18.5 C-9 -22 -12 -25 -12 -30 C-12 -36.6 -6.6 -42 0 -42 C6.6 -42 12 -36.6 12 -30 C12 -25 9 -22 6.5 -18.5 C3.5 -14 1.2 -9 0 0 Z" fill="#f56e5e" stroke="#2a1410" stroke-width="1.8" stroke-linejoin="round"/>
<path transform="translate(1203.5 722)" d="M0 0 C-1.2 -9 -3.5 -14 -6.5 -18.5 C-9 -22 -12 -25 -12 -30 C-12 -36.6 -6.6 -42 0 -42 C6.6 -42 12 -36.6 12 -30 C12 -25 9 -22 6.5 -18.5 C3.5 -14 1.2 -9 0 0 Z" fill="#f56e5e" stroke="#2a1410" stroke-width="1.8" stroke-linejoin="round"/>
<path transform="translate(1303 639.4)" d="M0 0 C-1.2 -9 -3.5 -14 -6.5 -18.5 C-9 -22 -12 -25 -12 -30 C-12 -36.6 -6.6 -42 0 -42 C6.6 -42 12 -36.6 12 -30 C12 -25 9 -22 6.5 -18.5 C3.5 -14 1.2 -9 0 0 Z" fill="#f56e5e" stroke="#2a1410" stroke-width="1.8" stroke-linejoin="round"/>
<path transform="translate(1590 590)" d="M0 0 C-1.2 -9 -3.5 -14 -6.5 -18.5 C-9 -22 -12 -25 -12 -30 C-12 -36.6 -6.6 -42 0 -42 C6.6 -42 12 -36.6 12 -30 C12 -25 9 -22 6.5 -18.5 C3.5 -14 1.2 -9 0 0 Z" fill="#f56e5e" stroke="#2a1410" stroke-width="1.8" stroke-linejoin="round"/>
<path transform="translate(1709.5 617.4)" d="M0 0 C-1.2 -9 -3.5 -14 -6.5 -18.5 C-9 -22 -12 -25 -12 -30 C-12 -36.6 -6.6 -42 0 -42 C6.6 -42 12 -36.6 12 -30 C12 -25 9 -22 6.5 -18.5 C3.5 -14 1.2 -9 0 0 Z" fill="#f56e5e" stroke="#2a1410" stroke-width="1.8" stroke-linejoin="round"/>
<path transform="translate(1554 698.7)" d="M0 0 C-1.2 -9 -3.5 -14 -6.5 -18.5 C-9 -22 -12 -25 -12 -30 C-12 -36.6 -6.6 -42 0 -42 C6.6 -42 12 -36.6 12 -30 C12 -25 9 -22 6.5 -18.5 C3.5 -14 1.2 -9 0 0 Z" fill="#f56e5e" stroke="#2a1410" stroke-width="1.8" stroke-linejoin="round"/>
<path d="M1640 712 L1668 726 L1735 734 L1919 733" stroke="#5bb8da" stroke-width="1.2" stroke-dasharray="6 4" fill="none"/>
<path d="M1652 714 L1680 770" stroke="#5bb8da" stroke-width="1.2" stroke-dasharray="6 4" fill="none"/>
<g filter="url(#cs)"><rect x="668" y="222" width="259" height="53.5" rx="2" fill="#fff"/></g>
<rect x="777" y="222" width="1" height="53.5" fill="#e8e8e8"/>
<text x="722.5" y="258.5" font-size="23.5" font-weight="bold" fill="#000" text-anchor="middle" textLength="47" lengthAdjust="spacingAndGlyphs">Map</text>
<text x="852.5" y="258.5" font-size="23.5" fill="#565656" text-anchor="middle" textLength="86.5" lengthAdjust="spacingAndGlyphs">Satellite</text>
<g filter="url(#cs)"><rect x="1851" y="222" width="54" height="53.5" rx="2" fill="#fff"/></g>
<path d="M1866.5 242 V236.5 H1872 M1884 236.5 H1889.5 V242 M1889.5 255 V260.5 H1884 M1872 260.5 H1866.5 V255" stroke="#666" stroke-width="3" fill="none"/>
<g filter="url(#cs)"><circle cx="1878" cy="719" r="27" fill="#fff"/></g>
<path d="M1872.5 709.5 L1878 704 L1883.5 709.5 M1872.5 728.5 L1878 734 L1883.5 728.5 M1867.5 713.5 L1862 719 L1867.5 724.5 M1888.5 713.5 L1894 719 L1888.5 724.5" stroke="#666" stroke-width="2.8" fill="none"/>
<g font-size="26" stroke="#e3f5fa" stroke-width="3" stroke-linejoin="round"><text x="668" y="767.5" textLength="75" lengthAdjust="spacingAndGlyphs">Google</text></g>
<text x="668" y="767.5" font-size="26" stroke-width="0.9" textLength="75" lengthAdjust="spacingAndGlyphs"><tspan fill="#4285f4" stroke="#4285f4">G</tspan><tspan fill="#ea4335" stroke="#ea4335">o</tspan><tspan fill="#fbbc05" stroke="#fbbc05">o</tspan><tspan fill="#4285f4" stroke="#4285f4">g</tspan><tspan fill="#34a853" stroke="#34a853">l</tspan><tspan fill="#ea4335" stroke="#ea4335">e</tspan></text>
<rect x="1616" y="760" width="131" height="17" fill="#fff" fill-opacity="0.7"/><rect x="1749" y="760" width="115" height="17" fill="#fff" fill-opacity="0.7"/><rect x="1866" y="760" width="53" height="17" fill="#fff" fill-opacity="0.7"/>
<text x="1622.4" y="773.9" font-size="12.5" fill="#111" textLength="116.4" lengthAdjust="spacingAndGlyphs">Keyboard shortcuts</text>
<text x="1755.5" y="773.9" font-size="12.5" fill="#111" textLength="100.5" lengthAdjust="spacingAndGlyphs">Map data ©2025</text>
<text x="1873" y="773.9" font-size="12.5" fill="#111" textLength="37" lengthAdjust="spacingAndGlyphs">Terms</text>
</svg>
</div>
</body></html>
